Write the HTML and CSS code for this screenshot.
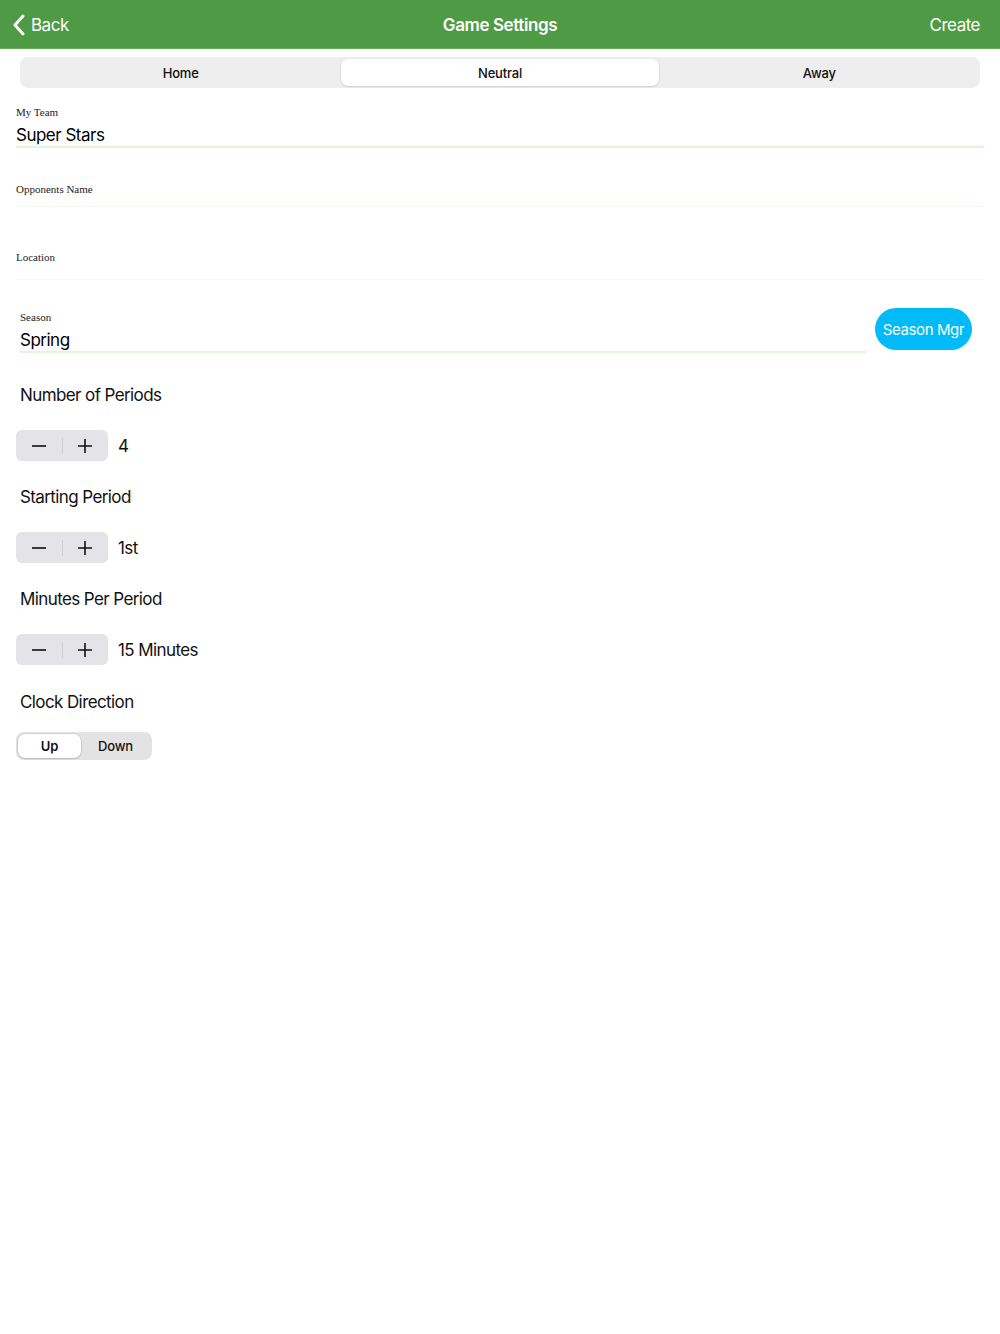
FILE: index.html
```html
<!DOCTYPE html>
<html>
<head>
<meta charset="utf-8">
<link rel="stylesheet" href="styles.css">
</head>
<body>
<header class="navbar">
  <div class="nav-left">
    <svg class="chev" width="14" height="22" viewBox="0 0 14 22"><path d="M11 2 L3 11 L11 20" fill="none" stroke="#fff" stroke-width="3" stroke-linecap="round" stroke-linejoin="round"/></svg>
    <span>Back</span>
  </div>
  <div class="nav-title">Game Settings</div>
  <div class="nav-right">Create</div>
</header>

<div class="venue">
  <div class="venue-item">Home</div>
  <div class="venue-item selected">Neutral</div>
  <div class="venue-item">Away</div>
</div>

<div class="field f-team">
  <div class="flabel">My Team</div>
  <div class="fvalue">Super Stars</div>
</div>
<div class="field f-opp empty">
  <div class="flabel">Opponents Name</div>
</div>
<div class="field f-loc empty">
  <div class="flabel">Location</div>
</div>

<div class="season-row">
  <div class="field season">
    <div class="flabel">Season</div>
    <div class="fvalue">Spring</div>
  </div>
  <button class="season-btn">Season Mgr</button>
</div>

<section class="setting">
  <div class="stitle">Number of Periods</div>
  <div class="srow">
    <div class="stepper">
      <span class="step minus"><svg width="16" height="16" viewBox="0 0 16 16"><path d="M1 8 H15" stroke="#111" stroke-width="1.6"/></svg></span>
      <span class="divider"></span>
      <span class="step plus"><svg width="16" height="16" viewBox="0 0 16 16"><path d="M1 8 H15 M8 1 V15" stroke="#111" stroke-width="1.6"/></svg></span>
    </div>
    <span class="sval">4</span>
  </div>
</section>

<section class="setting">
  <div class="stitle">Starting Period</div>
  <div class="srow">
    <div class="stepper">
      <span class="step minus"><svg width="16" height="16" viewBox="0 0 16 16"><path d="M1 8 H15" stroke="#111" stroke-width="1.6"/></svg></span>
      <span class="divider"></span>
      <span class="step plus"><svg width="16" height="16" viewBox="0 0 16 16"><path d="M1 8 H15 M8 1 V15" stroke="#111" stroke-width="1.6"/></svg></span>
    </div>
    <span class="sval">1st</span>
  </div>
</section>

<section class="setting">
  <div class="stitle">Minutes Per Period</div>
  <div class="srow">
    <div class="stepper">
      <span class="step minus"><svg width="16" height="16" viewBox="0 0 16 16"><path d="M1 8 H15" stroke="#111" stroke-width="1.6"/></svg></span>
      <span class="divider"></span>
      <span class="step plus"><svg width="16" height="16" viewBox="0 0 16 16"><path d="M1 8 H15 M8 1 V15" stroke="#111" stroke-width="1.6"/></svg></span>
    </div>
    <span class="sval">15 Minutes</span>
  </div>
</section>

<section class="setting last">
  <div class="stitle">Clock Direction</div>
  <div class="clockseg">
    <div class="cs-item selected">Up</div>
    <div class="cs-item">Down</div>
  </div>
</section>
</body>
</html>
```

FILE: styles.css
```css
* { box-sizing: border-box; }
html, body { margin: 0; padding: 0; background: #fff; }
body {
  font-family: Inter, "Liberation Sans", Arial, sans-serif;
  color: #111;
  width: 1000px;
}

.navbar {
  height: 49px;
  background: #4f9a44;
  display: flex;
  align-items: center;
  justify-content: space-between;
  color: #fff;
  font-size: 17px;
  letter-spacing: -0.5px;
  padding: 2px 20px 0 20px;
  border-bottom: 1px solid #6aad5f;
}
.nav-left { display: flex; align-items: center; gap: 5px; width: 120px; }
.chev { display: block; margin: -1px 0 0 -8px; }
.nav-title { font-weight: 600; font-size: 17px; letter-spacing: -0.4px; }
.nav-right { width: 120px; text-align: right; }

.venue {
  margin: 8px 20px 0 20px;
  height: 31px;
  background: #eeeeef;
  border-radius: 8px;
  display: flex;
  padding: 2px;
}
.venue-item {
  flex: 1;
  display: flex;
  align-items: center;
  justify-content: center;
  font-size: 13px;
  font-weight: 500;
  letter-spacing: -0.2px;
  color: #111;
}
.venue-item.selected {
  background: #fff;
  border-radius: 7px;
  box-shadow: 0 1px 2px rgba(0,0,0,0.12), 0 0 0 0.5px rgba(0,0,0,0.04);
  margin: 0 2px;
}

.field {
  margin: 0 16px;
  display: flex;
  flex-direction: column;
}
.flabel {
  font-family: "Liberation Serif", "Times New Roman", serif;
  font-size: 11px;
  line-height: 13px;
  color: #222;
}
.fvalue {
  font-size: 17px;
  line-height: 22px;
  letter-spacing: -0.5px;
  margin-top: 5px;
  color: #000;
}
.f-team { margin-top: 18px; border-bottom: 2px solid #e0f8da; }
.f-opp { margin-top: 35px; padding-bottom: 10px; border-bottom: 1px solid #f1faee; }
.f-loc { margin-top: 44px; padding-bottom: 15px; border-bottom: 1px solid #f1faee; }

.season-row {
  display: flex;
  align-items: flex-start;
  gap: 9px;
  margin: 29px 28px 0 20px;
}
.field.season {
  margin: 2px 0 0 0;
  flex: 1;
  border-bottom: 2px solid #e0f8da;
}
.season-btn {
  width: 97px;
  height: 42px;
  border: none;
  border-radius: 21px;
  background: #00bbf8;
  color: #fff;
  font-family: Inter, "Liberation Sans", Arial, sans-serif;
  font-size: 15px;
  letter-spacing: -0.4px;
  padding: 0;
  margin-top: -1px;
}

.setting { margin: 31px 0 0 0; }
.setting + .setting { margin-top: 25px; }
.setting + .setting.last { margin-top: 26px; }
.stitle {
  font-size: 17px;
  line-height: 22px;
  letter-spacing: -0.6px;
  margin-left: 20px;
  color: #111;
}
.srow {
  display: flex;
  align-items: center;
  margin: 24px 0 0 16px;
  gap: 10px;
}
.stepper {
  width: 92px;
  height: 31px;
  background: #e3e3e8;
  border-radius: 6px;
  display: flex;
  align-items: center;
}
.step {
  flex: 1;
  display: flex;
  align-items: center;
  justify-content: center;
}
.step svg { display: block; }
.divider {
  width: 1px;
  height: 16px;
  background: #cfcfd4;
}
.sval { font-size: 17px; letter-spacing: -0.6px; color: #111; }

.clockseg {
  margin: 19px 0 0 16px;
  width: 136px;
  height: 28px;
  background: #e3e3e3;
  border-radius: 8px;
  display: flex;
  padding: 2px;
}
.cs-item {
  flex: 1;
  display: flex;
  align-items: center;
  justify-content: center;
  font-size: 13px;
  font-weight: 500;
  letter-spacing: -0.2px;
}
.cs-item.selected {
  background: #fff;
  border-radius: 7px;
  font-weight: 600;
  box-shadow: 0 0 0 0.5px rgba(0,0,0,0.15), 0 1px 2px rgba(0,0,0,0.12);
  flex: 0 0 63px;
}
```
